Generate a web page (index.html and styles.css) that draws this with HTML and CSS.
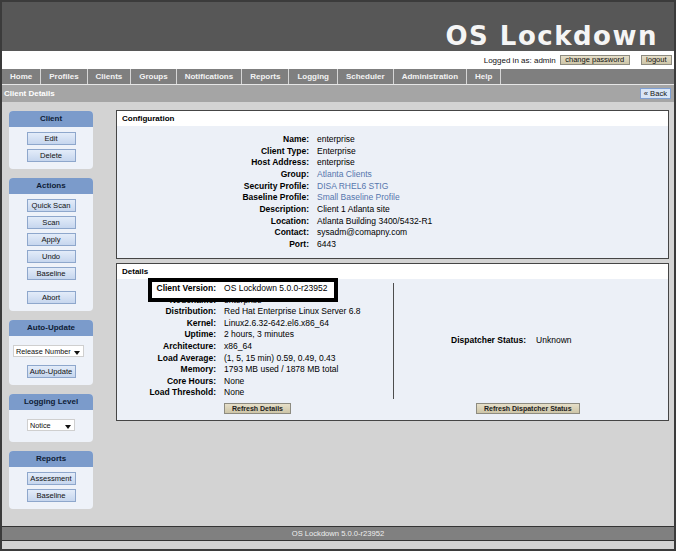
FILE: index.html
```html
<!DOCTYPE html>
<html lang="en">
<head>
<meta charset="utf-8">
<title>OS Lockdown - Client Details</title>
<link rel="stylesheet" href="styles.css">
</head>
<body>
<div class="frame">
  <header class="masthead"><div class="brand">OS Lockdown</div></header>
  <div class="userbar">
    <span class="who">Logged in as: admin</span>
    <button class="tan">change password</button>
    <button class="tan logout">logout</button>
  </div>
  <nav class="nav">
    <a>Home</a><a>Profiles</a><a>Clients</a><a>Groups</a><a>Notifications</a><a>Reports</a><a>Logging</a><a>Scheduler</a><a>Administration</a><a>Help</a>
  </nav>
  <div class="crumb">
    <span class="crumb-title">Client Details</span>
    <button class="back">&laquo; Back</button>
  </div>
  <div class="content">
    <aside class="side">
      <section class="box">
        <h3>Client</h3>
        <div class="box-body">
          <button class="sbtn">Edit</button>
          <button class="sbtn">Delete</button>
        </div>
      </section>
      <section class="box">
        <h3>Actions</h3>
        <div class="box-body">
          <button class="sbtn">Quick Scan</button>
          <button class="sbtn">Scan</button>
          <button class="sbtn">Apply</button>
          <button class="sbtn">Undo</button>
          <button class="sbtn">Baseline</button>
          <button class="sbtn abort">Abort</button>
        </div>
      </section>
      <section class="box">
        <h3>Auto-Update</h3>
        <div class="box-body with-select">
          <div class="sel sel-wide"><span>Release Number</span><i class="arrow"></i></div>
          <button class="sbtn after-select">Auto-Update</button>
        </div>
      </section>
      <section class="box">
        <h3>Logging Level</h3>
        <div class="box-body with-select only-select">
          <div class="sel sel-narrow"><span>Notice</span><i class="arrow"></i></div>
        </div>
      </section>
      <section class="box">
        <h3>Reports</h3>
        <div class="box-body">
          <button class="sbtn">Assessment</button>
          <button class="sbtn">Baseline</button>
        </div>
      </section>
    </aside>
    <main class="main">
      <section class="panel">
        <div class="panel-title">Configuration</div>
        <dl class="kv">
          <dt>Name:</dt><dd>enterprise</dd>
          <dt>Client Type:</dt><dd>Enterprise</dd>
          <dt>Host Address:</dt><dd>enterprise</dd>
          <dt>Group:</dt><dd><a>Atlanta Clients</a></dd>
          <dt>Security Profile:</dt><dd><a>DISA RHEL6 STIG</a></dd>
          <dt>Baseline Profile:</dt><dd><a>Small Baseline Profile</a></dd>
          <dt>Description:</dt><dd>Client 1 Atlanta site</dd>
          <dt>Location:</dt><dd>Atlanta Building 3400/5432-R1</dd>
          <dt>Contact:</dt><dd>sysadm@comapny.com</dd>
          <dt>Port:</dt><dd>6443</dd>
        </dl>
      </section>
      <section class="panel">
        <div class="panel-title">Details</div>
        <div class="details-body">
          <div class="det-left">
            <div class="stats">
              <div class="k hl">Client Version:</div><div class="v hl">OS Lockdown 5.0.0-r23952</div>
              <div class="k">Nodename:</div><div class="v">enterprise</div>
              <div class="k">Distribution:</div><div class="v">Red Hat Enterprise Linux Server 6.8</div>
              <div class="k">Kernel:</div><div class="v">Linux2.6.32-642.el6.x86_64</div>
              <div class="k">Uptime:</div><div class="v">2 hours, 3 minutes</div>
              <div class="k">Architecture:</div><div class="v">x86_64</div>
              <div class="k">Load Average:</div><div class="v">(1, 5, 15 min) 0.59, 0.49, 0.43</div>
              <div class="k">Memory:</div><div class="v">1793 MB used / 1878 MB total</div>
              <div class="k">Core Hours:</div><div class="v">None</div>
              <div class="k">Load Threshold:</div><div class="v">None</div>
            </div>
          </div>
          <div class="det-right">
            <div class="disp"><span class="k">Dispatcher Status:</span><span class="v">Unknown</span></div>
          </div>
          <div class="btn-left"><button class="tan rb">Refresh Details</button></div>
          <div class="btn-right"><button class="tan rb">Refresh Dispatcher Status</button></div>
          <div class="highlight" aria-hidden="true"></div>
        </div>
      </section>
    </main>
  </div>
  <footer class="foot">OS Lockdown 5.0.0-r23952</footer>
  <div class="bottom"></div>
</div>
</body>
</html>
```
FILE: styles.css
```css
* { box-sizing: border-box; margin: 0; padding: 0; }
html, body { background: #fff; }
body { font-family: "Liberation Sans", Arial, sans-serif; font-size: 8px; color: #000; }
button { font-family: "Liberation Sans", Arial, sans-serif; -webkit-appearance: none; appearance: none; cursor: default; }

.frame { width: 676px; height: 551px; border: 2px solid #3b3b3b; display: flex; flex-direction: column; background: #d3d3d3; }

.masthead { height: 49px; flex: none; background: #575757; display: flex; justify-content: flex-end; padding: 21px 16px 0 0; }
.brand { font-family: "DejaVu Sans", sans-serif; font-weight: bold; font-size: 26px; line-height: 26px; letter-spacing: 1.5px; color: #f5f5f5; }

.userbar { height: 18px; flex: none; background: #fff; display: flex; justify-content: flex-end; align-items: center; gap: 4px; padding-right: 2px; }
.who { font-size: 8px; color: #111; }
.tan { font-size: 7.5px; color: #111; height: 10px; line-height: 8px; padding: 0 4.5px; background: linear-gradient(#e6dfc9, #cdc5a7); border: 1px solid #8d8b80; }
.logout { margin-left: 7px; }

.nav { height: 16px; flex: none; background: #7f7f7f; border-bottom: 1px solid #e6e6e6; display: flex; }
.nav a { font-weight: bold; font-size: 8px; color: #f3f3f3; line-height: 15px; padding: 0 8px; border-right: 1px solid #d6d6d6; }

.crumb { height: 17px; flex: none; background: #a5a5a5; display: flex; align-items: center; justify-content: space-between; padding: 0 3px 0 2px; }
.crumb-title { font-weight: bold; font-size: 8px; color: #fff; }
.back { font-size: 7.6px; height: 11px; line-height: 9px; padding: 0 3px; background: #d9e5f6; border: 1px solid #7f9fd2; color: #111; }

.content { flex: 1; display: flex; align-items: flex-start; padding: 9px 5px 0 7px; }
.side { width: 84px; flex: none; display: flex; flex-direction: column; gap: 9px; }
.main { flex: 1; margin-left: 23px; margin-top: -1px; display: flex; flex-direction: column; gap: 4px; }

.box { background: #eef2f9; border-radius: 4px; overflow: hidden; }
.box h3 { height: 16px; line-height: 16px; background: #7b9bcb; text-align: center; font-size: 8px; font-weight: bold; color: #0e1c36; }
.box-body { display: flex; flex-direction: column; align-items: center; gap: 4px; padding: 5px 0 7px; }
.box-body.with-select { padding-top: 9px; }
.box-body.only-select { padding-bottom: 11px; }
.sbtn { width: 49px; height: 13px; font-size: 7.6px; line-height: 11px; color: #111; background: linear-gradient(#e3ecf9, #c6d6ee); border: 1px solid #8ea7cc; }
.sbtn.abort { margin-top: 7px; }
.sbtn.after-select { margin-top: 4px; }

.sel { height: 12px; background: #fff; border: 1px solid #cfcfcf; display: flex; align-items: center; padding: 0 3px 0 2px; font-size: 7.3px; color: #111; white-space: nowrap; }
.sel span { overflow: hidden; }
.sel .arrow { margin-left: auto; flex: none; width: 0; height: 0; border-left: 3px solid transparent; border-right: 3px solid transparent; border-top: 4px solid #111; margin-top: 3px; }
.sel-wide { width: 71px; margin-right: 5px; }
.sel-narrow { width: 48px; }

.panel { border: 1px solid #454545; background: #ecf0f7; }
.panel-title { height: 15px; line-height: 15px; background: #fff; font-weight: bold; font-size: 8px; padding-left: 5px; }

.kv { display: grid; grid-template-columns: 192px auto; column-gap: 8px; padding: 8px 0 7.5px; font-size: 8.5px; line-height: 11.65px; }
.kv dt { text-align: right; font-weight: bold; }
.kv dd { white-space: nowrap; }
.kv a { color: #5676ad; }

.details-body { position: relative; display: grid; grid-template-columns: 277px 1fr; padding: 4px 0 5px; font-size: 8.5px; line-height: 11.6px; }
.det-left { border-right: 1px solid #4d4d4d; display: flex; justify-content: center; }
.stats { display: grid; grid-template-columns: auto auto; column-gap: 8px; }
.stats .k { text-align: right; font-weight: bold; white-space: nowrap; }
.stats .v { white-space: nowrap; }
.stats .hl { position: relative; z-index: 2; }
.det-right { display: flex; align-items: center; padding-left: 57px; }
.disp { display: flex; gap: 10px; }
.disp .k { font-weight: bold; }
.btn-left { padding: 4px 0 0 107px; }
.btn-right { padding: 4px 0 0 82px; }
.rb { height: 11px; font-size: 7px; font-weight: bold; line-height: 9px; padding: 0 7px; color: #222; }
.highlight { position: absolute; left: 31px; top: -1px; width: 190px; height: 24px; border: 4px solid #000; background: #fff; z-index: 1; }

.foot { height: 15px; flex: none; border-top: 1px solid #333; border-bottom: 1px solid #333; background: #808080; color: #eee; font-size: 7.6px; line-height: 13px; text-align: center; }
.bottom { height: 8px; flex: none; background: #d3d3d3; }
```
